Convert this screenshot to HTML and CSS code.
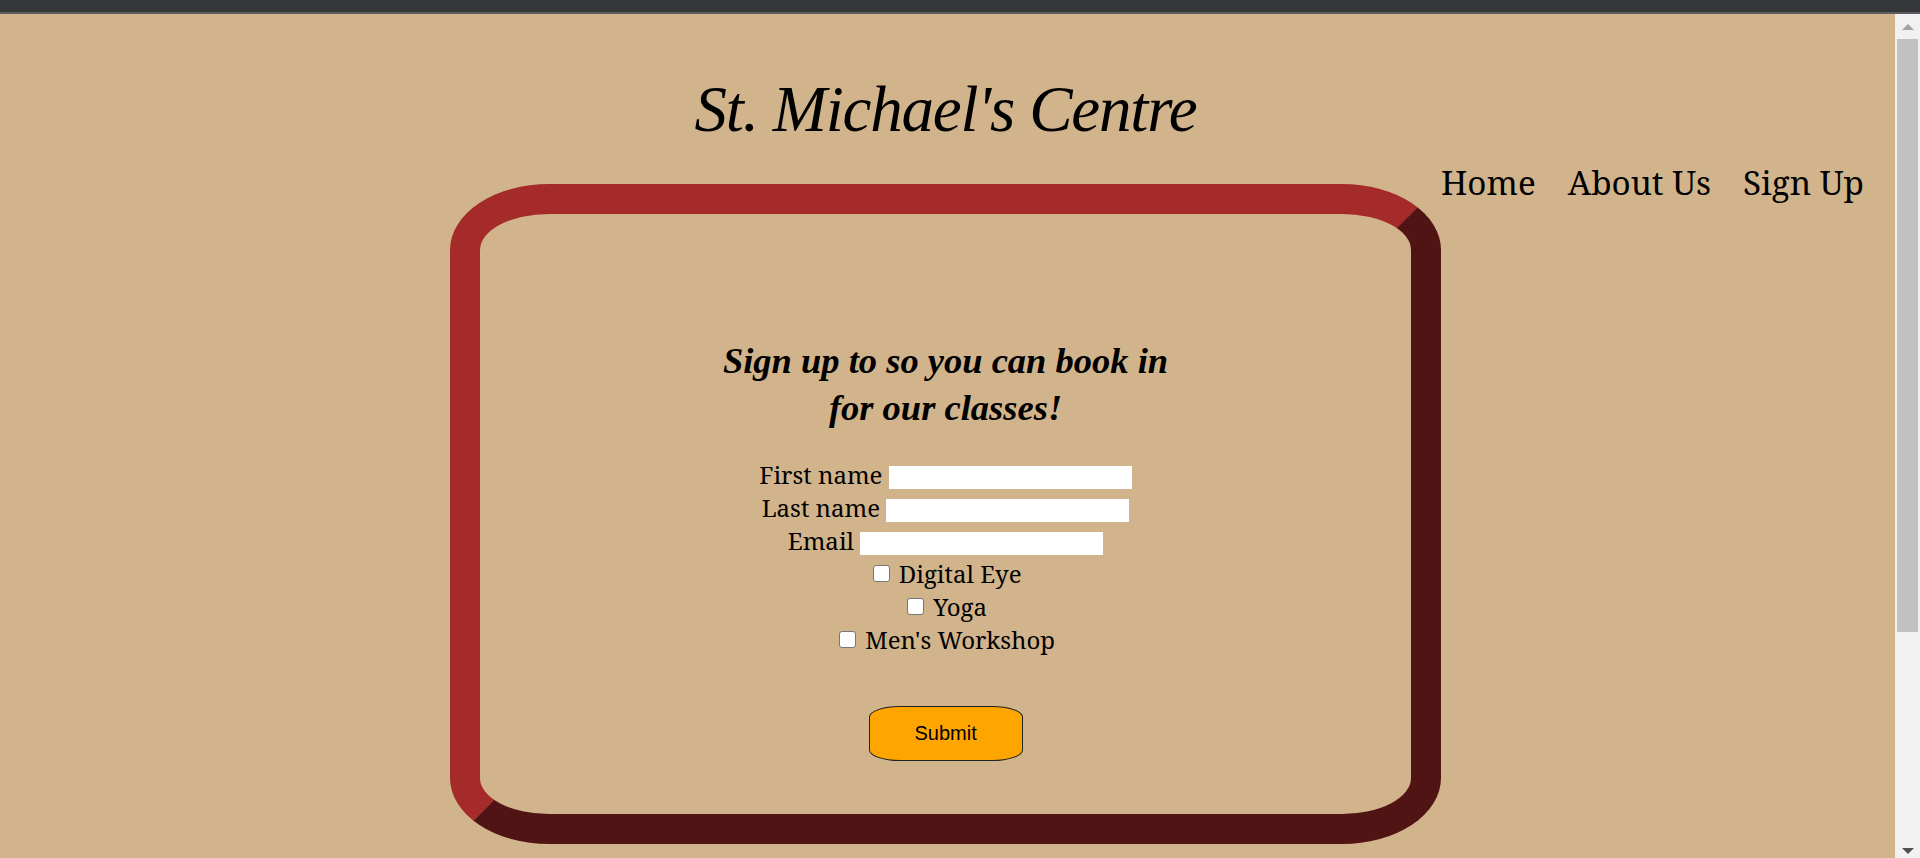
FILE: index.html
```html
<!DOCTYPE html>
<html lang="en">
<head>
<meta charset="utf-8">
<title>St. Michael's Centre - Sign Up</title>
<link rel="stylesheet" href="styles.css">
</head>
<body>
<div class="chrome-bar"></div>
<div class="window">
  <div class="page">
    <header class="site-header">
      <h1 class="site-title">St. Michael's Centre</h1>
    </header>
    <div class="content-row">
      <main class="signup-box">
        <h2 class="signup-heading">Sign up to so you can book in<br>for our classes!</h2>
        <form class="signup-form">
          <div class="form-row"><label for="fname">First name</label> <input class="text-input" type="text" id="fname"></div>
          <div class="form-row"><label for="lname">Last name</label> <input class="text-input" type="text" id="lname"></div>
          <div class="form-row"><label for="email">Email</label> <input class="text-input" type="email" id="email"></div>
          <div class="form-row"><input class="check" type="checkbox" id="c1"> <label for="c1">Digital Eye</label></div>
          <div class="form-row"><input class="check" type="checkbox" id="c2"> <label for="c2">Yoga</label></div>
          <div class="form-row"><input class="check" type="checkbox" id="c3"> <label for="c3">Men's Workshop</label></div>
          <div class="submit-row"><button class="submit-btn" type="button">Submit</button></div>
        </form>
      </main>
      <nav class="main-nav">
        <a href="#">Home</a>
        <a href="#">About Us</a>
        <a href="#">Sign Up</a>
      </nav>
    </div>
  </div>
  <div class="scrollbar">
    <div class="sb-arrow sb-up"></div>
    <div class="sb-thumb"></div>
    <div class="sb-space"></div>
    <div class="sb-arrow sb-down"></div>
  </div>
</div>
</body>
</html>
```

FILE: styles.css
```css
html, body {
  margin: 0;
  padding: 0;
  height: 858px;
  overflow: hidden;
}

body {
  font-family: "Noto Serif", "DejaVu Serif", serif;
  color: #000;
}

.chrome-bar {
  height: 12px;
  background: #35363a;
  border-bottom: 2px solid #5d5e62;
}

.window {
  display: flex;
  height: 844px;
}

.page {
  flex: 1;
  background: #d2b48c;
  padding-right: 4px;
  overflow: hidden;
}

.site-header {
  text-align: center;
  padding-top: 59px;
}

.site-title {
  margin: 0;
  font-family: "Liberation Serif", "Times New Roman", serif;
  font-style: italic;
  font-weight: normal;
  font-size: 65px;
  letter-spacing: -1.2px;
  line-height: 72px;
}

.content-row {
  display: grid;
  grid-template-columns: minmax(0, 1fr) 991px minmax(0, 1fr);
  margin-top: 14px;
}

.signup-box {
  grid-column: 2;
  grid-row: 1;
  box-sizing: border-box;
  height: 660px;
  margin-top: 25px;
  border: 30px outset #a52a2a;
  border-radius: 10%;
  text-align: center;
  padding-top: 123px;
}

.signup-heading {
  margin: 0;
  font-family: "Liberation Serif", "Times New Roman", serif;
  font-style: italic;
  font-weight: bold;
  font-size: 36.5px;
  line-height: 47px;
}

.signup-form {
  margin-top: 27px;
}

.form-row {
  font-size: 24px;
  line-height: 33px;
}

.text-input {
  width: 243px;
  height: 23px;
  border: none;
  padding: 0;
  margin: 0;
  background: #fff;
  vertical-align: middle;
}

.check {
  appearance: none;
  -webkit-appearance: none;
  box-sizing: border-box;
  width: 17px;
  height: 17px;
  margin: 0 3px 1px 3px;
  border: 1.5px solid #767676;
  border-radius: 3px;
  background: #fff;
  vertical-align: baseline;
}

.submit-row {
  margin-top: 50px;
}

.submit-btn {
  font-family: "Liberation Sans", Arial, sans-serif;
  font-size: 20px;
  line-height: 23px;
  color: #000;
  background: #ffa500;
  border: 1px solid #222;
  border-radius: 20%;
  padding: 15px 45px;
  width: 154px;
  height: 55px;
  box-sizing: border-box;
}

.main-nav {
  grid-column: 3;
  grid-row: 1;
  justify-self: end;
  align-self: start;
  margin-right: 27px;
  display: flex;
  gap: 32px;
  font-size: 33.25px;
  white-space: nowrap;
}

.main-nav a {
  flex-shrink: 0;
  color: #000;
  text-decoration: none;
}

.scrollbar {
  width: 25px;
  background: #f1f1f1;
  display: flex;
  flex-direction: column;
  align-items: center;
}

.sb-arrow {
  width: 0;
  height: 0;
  border-left: 6px solid transparent;
  border-right: 6px solid transparent;
}

.sb-up {
  margin-top: 10px;
  border-bottom: 6px solid #a3a3a3;
}

.sb-thumb {
  margin-top: 9px;
  width: 21px;
  height: 593px;
  background: #c1c1c1;
}

.sb-space {
  flex: 1;
}

.sb-down {
  margin-bottom: 4px;
  border-top: 6px solid #505050;
}
```
